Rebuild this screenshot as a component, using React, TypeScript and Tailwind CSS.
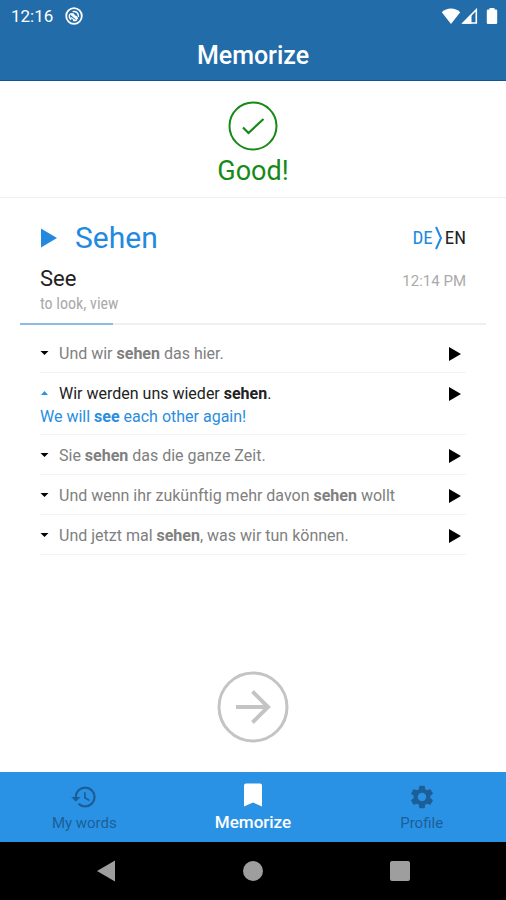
import { useState } from 'react';
import type { ReactNode } from 'react';
import { MdHistory, MdSettings } from 'react-icons/md';

interface Example {
  id: number;
  text: ReactNode;
  translation?: ReactNode;
}

const examples: Example[] = [
  {
    id: 1,
    text: (
      <>
        Und wir <b className="font-bold">sehen</b> das hier.
      </>
    ),
  },
  {
    id: 2,
    text: (
      <>
        Wir werden uns wieder <b className="font-bold">sehen</b>.
      </>
    ),
    translation: (
      <>
        We will <b className="font-bold">see</b> each other again!
      </>
    ),
  },
  {
    id: 3,
    text: (
      <>
        Sie <b className="font-bold">sehen</b> das die ganze Zeit.
      </>
    ),
  },
  {
    id: 4,
    text: (
      <>
        Und wenn ihr zukünftig mehr davon <b className="font-bold">sehen</b>{' '}
        wollt
      </>
    ),
  },
  {
    id: 5,
    text: (
      <>
        Und jetzt mal <b className="font-bold">sehen</b>, was wir tun können.
      </>
    ),
  },
];

function BookmarkIcon({ className }: { className?: string }) {
  return (
    <svg viewBox="0 0 30 30" className={className} fill="currentColor">
      <path d="M8 3.500h14a2 2 0 0 1 2 2V26.500L15 22.500 6 26.500V5.500a2 2 0 0 1 2-2z" />
    </svg>
  );
}

const tabs = [
  { label: 'My words', icon: MdHistory },
  { label: 'Memorize', icon: BookmarkIcon },
  { label: 'Profile', icon: MdSettings },
];

function StatusBar() {
  return (
    <div className="flex h-8 items-center justify-between pr-2 pl-[11px]">
      <div className="flex items-center gap-3">
        <span className="text-[17px] leading-6">12:16</span>
        <svg viewBox="0 0 18 18" className="size-[18px]" fill="none">
          <circle cx="9" cy="9" r="7.8" stroke="currentColor" strokeWidth="1.8" />
          <path
            d="M6.200 12.600a4.600 4.600 0 0 1-1.400-5.400M7.600 4.600a4.600 4.600 0 0 1 5.800 5.400M11.800 12.600a4.600 4.600 0 0 1-3.800.9"
            stroke="currentColor"
            strokeWidth="1.500"
          />
          <path
            d="M4.500 6.500C7 5.400 9.500 6 10 8.500c1.500-.5 2.500 1 3.200 3.200L11.500 13 6.500 8.800z"
            fill="currentColor"
          />
          <path d="M6 10.500l4 3" stroke="currentColor" strokeWidth="1.200" />
        </svg>
      </div>
      <div className="flex items-center">
        <svg viewBox="0 0 20 16" className="h-4 w-5" fill="currentColor">
          <path d="M10 16L.8 4.200C3.400 1.800 6.500.5 10 .5s6.600 1.300 9.200 3.700z" />
        </svg>
        <svg viewBox="0 0 17 16" className="h-4 w-[17px]">
          <path
            d="M15.300 1.800V15H2.200z"
            fill="none"
            stroke="currentColor"
            strokeWidth="1.600"
          />
          <path d="M1 15.800L10.500 6v9.800z" fill="currentColor" />
        </svg>
        <svg viewBox="0 0 12 18" className="ml-2 h-[18px] w-3" fill="currentColor">
          <path d="M3.500 1h5v1.500H10a1.200 1.200 0 0 1 1.200 1.200v12.100A1.200 1.200 0 0 1 10 17H2a1.200 1.200 0 0 1-1.200-1.200V3.700A1.200 1.200 0 0 1 2 2.500h1.500z" />
        </svg>
      </div>
    </div>
  );
}

function ExampleRow({
  example,
  open,
  onToggle,
}: {
  example: Example;
  open: boolean;
  onToggle: () => void;
}) {
  return (
    <li className="border-b border-[#f3f3f3] pt-[9px] pb-[6px]">
      <div className="flex items-center justify-between">
        <button
          type="button"
          aria-expanded={open}
          onClick={onToggle}
          className={`flex items-center gap-[10px] text-left text-base ${open ? 'text-[#222]' : 'text-[#808080]'}`}
        >
          <svg
            viewBox="0 0 9 8"
            className={`h-2 w-[9px] shrink-0 ${open ? 'text-[#2a92e5]' : 'text-black'}`}
            fill="currentColor"
          >
            {open ? (
              <path d="M1 5L4.500 1 8 5z" />
            ) : (
              <path d="M.5 1h8L4.500 5z" />
            )}
          </svg>
          <span>{example.text}</span>
        </button>
        <button type="button" aria-label="Play sentence" className="pr-[5px]">
          <svg viewBox="0 0 12 14" className="h-[14px] w-3">
            <path d="M0 0l12 7-12 7z" />
          </svg>
        </button>
      </div>
      {open && example.translation && (
        <p className="text-base leading-[22px] text-[#2a8de0]">
          {example.translation}
        </p>
      )}
    </li>
  );
}

export default function App() {
  const [openId, setOpenId] = useState<number | null>(2);
  const [activeTab, setActiveTab] = useState('Memorize');

  return (
    <div className="flex min-h-screen flex-col bg-white font-['Roboto',sans-serif] text-black">
      <header className="border-b border-[#135393] bg-[#226caa] text-white">
        <StatusBar />
        <h1 className="h-12 text-center text-[25px] leading-[48px] font-medium">
          Memorize
        </h1>
      </header>

      <section className="flex flex-col items-center border-b border-[#f0f0f0] pt-5 pb-[10px] text-[#168a16]">
        <svg viewBox="0 0 50 50" className="size-[50px]" fill="none">
          <circle cx="25" cy="25" r="23.500" stroke="currentColor" strokeWidth="2" />
          <path d="M15 26.500l5.500 5.500L35.500 18" stroke="currentColor" strokeWidth="2.200" />
        </svg>
        <p className="mt-1 text-[27px] leading-8">Good!</p>
      </section>

      <main className="flex flex-1 flex-col px-5">
        <div className="flex items-start justify-between px-5 pt-5 pb-2">
          <div>
            <div className="flex items-center gap-[18px] text-[#2389df]">
              <button type="button" aria-label="Play word">
                <svg viewBox="0 0 17 20" className="h-5 w-[17px]" fill="currentColor">
                  <path d="M1 .5l16 9.500-16 9.500z" />
                </svg>
              </button>
              <h2 className="text-[30px] leading-10">Sehen</h2>
            </div>
            <p className="mt-[7px] text-[22px] leading-7 text-[#222]">See</p>
            <p className="font-['Roboto_Condensed','Roboto',sans-serif] text-base leading-[22px] text-[#aaa]">
              to look, view
            </p>
          </div>
          <div className="flex flex-col items-end pt-2">
            <p className="flex items-center font-['Roboto_Condensed','Roboto',sans-serif] text-[19px] leading-6 text-[#222]">
              <span className="text-[#2389df]">DE</span>
              <svg viewBox="0 0 10 24" className="mx-px h-6 w-[10px]" fill="none">
                <path d="M2 1l5 11-5 11" stroke="#2389df" strokeWidth="2" />
              </svg>
              <span>EN</span>
            </p>
            <p className="mt-[21px] text-[15px] leading-5 text-[#aaa]">12:14 PM</p>
          </div>
        </div>

        <div className="h-[2px] bg-[#efefef]">
          <div className="h-full w-1/5 bg-[#8dbbe8]" />
        </div>

        <ul className="px-5 pt-2">
          {examples.map((example) => (
            <ExampleRow
              key={example.id}
              example={example}
              open={openId === example.id}
              onToggle={() =>
                setOpenId(openId === example.id ? null : example.id)
              }
            />
          ))}
        </ul>

        <button
          type="button"
          aria-label="Next word"
          className="mx-auto mt-auto mb-7 text-[#c4c4c4]"
        >
          <svg viewBox="0 0 74 74" className="size-[74px]" fill="none" stroke="currentColor">
            <circle cx="37" cy="37" r="34" strokeWidth="3" />
            <path d="M20 37h32M36.500 21.500L52 37 36.500 52.500" strokeWidth="4" />
          </svg>
        </button>
      </main>

      <nav className="grid h-[70px] grid-cols-3 bg-[#2a92e5]">
        {tabs.map(({ label, icon: Icon }) => {
          const active = activeTab === label;
          return (
            <button
              key={label}
              type="button"
              onClick={() => setActiveTab(label)}
              className={`flex flex-col items-center ${active ? 'pt-2 text-white' : 'pt-[11px] text-[#1c5f98]'}`}
            >
              <Icon className={active ? 'size-[30px]' : 'size-7'} />
              <span className={active ? 'text-[17px] leading-6 font-medium' : 'text-[15px] leading-6'}>
                {label}
              </span>
            </button>
          );
        })}
      </nav>

      <div className="flex h-[58px] items-center justify-around bg-black px-8 text-[#9e9e9e]">
        <button type="button" aria-label="Back">
          <svg viewBox="0 0 20 22" className="h-[22px] w-5" fill="currentColor">
            <path d="M19 .5v21L1 11z" />
          </svg>
        </button>
        <button type="button" aria-label="Home" className="size-5 rounded-full bg-[#9e9e9e]" />
        <button type="button" aria-label="Recent apps" className="size-5 rounded-xs bg-[#9e9e9e]" />
      </div>
    </div>
  );
}
